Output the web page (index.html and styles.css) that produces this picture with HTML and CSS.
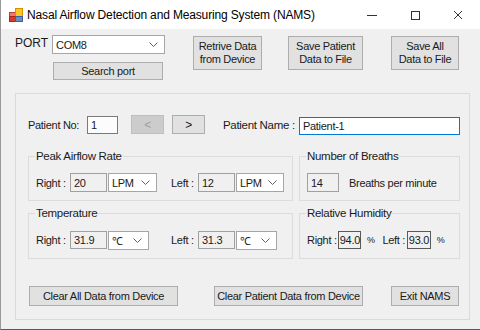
FILE: index.html
```html
<!DOCTYPE html>
<html lang="en">
<head>
    <meta charset="UTF-8">
    <title>NAMS</title>
    <link rel="stylesheet" href="styles.css">
</head>
<body>
<div class="window">
    <div class="titlebar">
        <svg class="app_icon" width="14" height="14" viewBox="0 0 14 14">
            <rect x="0.5" y="4.5" width="6" height="4" fill="#f07a6a" stroke="#c04030"/>
            <rect x="0.5" y="8.5" width="6" height="5" fill="#d83a2a" stroke="#a02a1a"/>
            <rect x="6.5" y="0.5" width="7" height="8" fill="#f8c820" stroke="#d89000"/>
            <rect x="6.5" y="8.5" width="7" height="5" fill="#6a8cc8" stroke="#40609a"/>
        </svg>
        <span class="title">Nasal Airflow Detection and Measuring System (NAMS)</span>
        <div class="controls">
            <svg width="10" height="10" viewBox="0 0 10 10"><line x1="0" y1="5.5" x2="10" y2="5.5" stroke="#333"/></svg>
            <svg width="10" height="10" viewBox="0 0 10 10"><rect x="1.5" y="1.5" width="8" height="8" fill="none" stroke="#333"/></svg>
            <svg width="10" height="10" viewBox="0 0 10 10"><path d="M1 1 L9 9 M9 1 L1 9" stroke="#333"/></svg>
        </div>
    </div>

    <div class="toolbar">
        <div class="port">
            <span class="port_label">PORT</span>
            <div class="combo port_combo"><span>COM8</span><svg width="9" height="5" viewBox="0 0 9 5"><polyline points="0.5,0.5 4.5,4.5 8.5,0.5" fill="none" stroke="#606060"/></svg></div>
            <button class="btn search_btn">Search port</button>
        </div>
        <button class="btn big_btn retrive">Retrive Data<br>from Device</button>
        <button class="btn big_btn save_patient">Save Patient<br>Data to File</button>
        <button class="btn big_btn save_all">Save All<br>Data to File</button>
    </div>

    <div class="panel">
        <div class="patient_row">
            <span class="lbl lbl_no">Patient No:</span>
            <div class="box box_white box_no">1</div>
            <button class="btn nav_btn disabled">&lt;</button>
            <button class="btn nav_btn next">&gt;</button>
            <span class="lbl lbl_name">Patient Name :</span>
            <div class="box box_focus box_name">Patient-1</div>
        </div>

        <div class="groups">
            <fieldset class="group">
                <legend>Peak Airflow Rate</legend>
                <div class="row">
                    <span class="lbl w_right">Right :</span>
                    <div class="box box_ro w37">20</div>
                    <div class="combo w49 ml1"><span>LPM</span><svg width="9" height="5" viewBox="0 0 9 5"><polyline points="0.5,0.5 4.5,4.5 8.5,0.5" fill="none" stroke="#606060"/></svg></div>
                    <span class="lbl w_left ml14">Left :</span>
                    <div class="box box_ro w37">12</div>
                    <div class="combo w48 ml1"><span>LPM</span><svg width="9" height="5" viewBox="0 0 9 5"><polyline points="0.5,0.5 4.5,4.5 8.5,0.5" fill="none" stroke="#606060"/></svg></div>
                </div>
            </fieldset>
            <fieldset class="group">
                <legend>Number of Breaths</legend>
                <div class="row">
                    <div class="box box_ro w32">14</div>
                    <span class="lbl ml10">Breaths per minute</span>
                </div>
            </fieldset>
            <fieldset class="group second">
                <legend>Temperature</legend>
                <div class="row short">
                    <span class="lbl w_right">Right :</span>
                    <div class="box box_ro w37">31.9</div>
                    <div class="combo w41 ml1"><span>&#8451;</span><svg width="9" height="5" viewBox="0 0 9 5"><polyline points="0.5,0.5 4.5,4.5 8.5,0.5" fill="none" stroke="#606060"/></svg></div>
                    <span class="lbl w_left ml22">Left :</span>
                    <div class="box box_ro w37">31.3</div>
                    <div class="combo w41 ml1"><span>&#8451;</span><svg width="9" height="5" viewBox="0 0 9 5"><polyline points="0.5,0.5 4.5,4.5 8.5,0.5" fill="none" stroke="#606060"/></svg></div>
                </div>
            </fieldset>
            <fieldset class="group second">
                <legend>Relative Humidity</legend>
                <div class="row short">
                    <span class="lbl w_right">Right :</span>
                    <div class="box box_dark w25">94.0</div>
                    <span class="pct">%</span>
                    <span class="lbl w_left">Left :</span>
                    <div class="box box_dark w26">93.0</div>
                    <span class="pct">%</span>
                </div>
            </fieldset>
        </div>

        <div class="bottom_row">
            <button class="btn low_btn clear_all">Clear All Data from Device</button>
            <button class="btn low_btn clear_patient">Clear Patient Data from Device</button>
            <button class="btn low_btn exit">Exit NAMS</button>
        </div>
    </div>
</div>
</body>
</html>
```

FILE: styles.css
```css
*{
    margin:0;
    padding:0;
    box-sizing:border-box;
}
body{
    width:480px;
    height:330px;
    overflow:hidden;
    font-family:"Liberation Sans",Arial,sans-serif;
    font-size:11px;
    letter-spacing:-0.3px;
    color:#1a1a1a;
}
.window{
    width:480px;
    height:330px;
    background:#f0f0f0;
    border-left:1px solid #9a9a9a;
    border-bottom:1px solid #5a5a5a;
}

/* title bar */
.titlebar{
    height:29px;
    background:#fff;
    display:flex;
    align-items:center;
    padding-left:8px;
}
.app_icon{
    margin-top:1px;
}
.title{
    margin-left:4px;
    font-size:12px;
    letter-spacing:-0.15px;
    color:#000;
}
.controls{
    margin-left:auto;
    display:flex;
    gap:33px;
    padding-right:17px;
}

/* top area */
.toolbar{
    height:64px;
    display:flex;
    align-items:flex-start;
    padding:6px 0 0 14px;
}
.port{
    display:grid;
    grid-template-columns:37px 113px;
    row-gap:8px;
    align-items:center;
}
.port_label{
    font-size:12px;
    letter-spacing:0;
    margin-top:-3px;
}
.port_combo{
    height:19px;
}
.search_btn{
    grid-column:2;
    width:110px;
    height:18px;
    margin-left:1px;
}
.big_btn{
    height:34px;
    margin-top:1px;
    line-height:13px;
}
.retrive{
    width:69px;
    margin-left:28px;
}
.save_patient{
    width:75px;
    margin-left:26px;
}
.save_all{
    width:68px;
    margin-left:28px;
}

/* controls */
.btn{
    font-family:inherit;
    font-size:11px;
    letter-spacing:-0.3px;
    color:#1a1a1a;
    background:#e1e1e1;
    border:1px solid #adadad;
}
.combo{
    display:flex;
    align-items:center;
    justify-content:space-between;
    background:#fff;
    border:1px solid #a6a6a6;
    padding:0 6px 0 3px;
}
.combo svg{
    flex:none;
}
.box{
    display:flex;
    align-items:center;
    padding-left:3px;
    border:1px solid #a0a0a0;
    background:#f0f0f0;
}
.box_white{
    background:#fcfcfc;
    border-color:#7a7a7a;
}
.box_focus{
    background:#fff;
    border-color:#0078d7;
}
.box_dark{
    border-color:#5a5a5a;
    padding-left:1px;
}
.lbl{
    white-space:nowrap;
}

/* main panel */
.panel{
    margin-left:14px;
    width:455px;
    height:227px;
    border:1px solid #dadada;
    padding-top:21px;
}
.patient_row{
    display:flex;
    align-items:center;
    height:19px;
    padding-left:12px;
}
.lbl_no{
    width:59px;
}
.box_no{
    width:31px;
    height:18px;
    margin-top:1px;
}
.nav_btn{
    width:33px;
    height:19px;
    font-size:12px;
}
.disabled{
    margin-left:13px;
    background:#cccccc;
    border-color:#bfbfbf;
    color:#a0a0a0;
}
.next{
    margin-left:8px;
}
.lbl_name{
    margin-left:18px;
    width:76px;
    font-size:11.5px;
}
.box_name{
    width:161px;
    height:18px;
    margin-top:2px;
}

.groups{
    display:grid;
    grid-template-columns:265px 161px;
    column-gap:6px;
    row-gap:5px;
    margin:15px 0 0 12px;
}
.group{
    border:1px solid #dcdcdc;
    min-width:0;
    height:52px;
    padding:0 7px 0 7px;
}
.group.second{
    height:53px;
}
.group legend{
    margin-left:-1px;
    padding:0 1px;
    font-size:11.5px;
    line-height:14px;
}
.row{
    display:flex;
    align-items:center;
    height:19px;
    margin-top:10px;
}
.row.short{
    height:18px;
    margin-top:11px;
}
.row .box{
    height:19px;
}
.row.short .box{
    height:18px;
}
.row .combo{
    height:19px;
}
.w_right{
    width:34px;
}
.w_left{
    width:27px;
}
.w25{ width:25px; }
.w26{ width:26px; }
.w32{ width:32px; }
.w37{ width:37px; }
.w41{ width:41px; }
.w48{ width:48px; }
.w49{ width:49px; }
.ml1{ margin-left:1px; }
.ml10{ margin-left:10px; }
.ml14{ margin-left:14px; }
.ml22{ margin-left:22px; }
.pct{
    width:23px;
    padding-left:6px;
    font-size:9px;
}

.bottom_row{
    display:flex;
    margin:27px 0 0 13px;
}
.low_btn{
    height:20px;
    width:149px;
}
.clear_patient{
    margin-left:36px;
}
.exit{
    width:68px;
    margin-left:28px;
}
```
